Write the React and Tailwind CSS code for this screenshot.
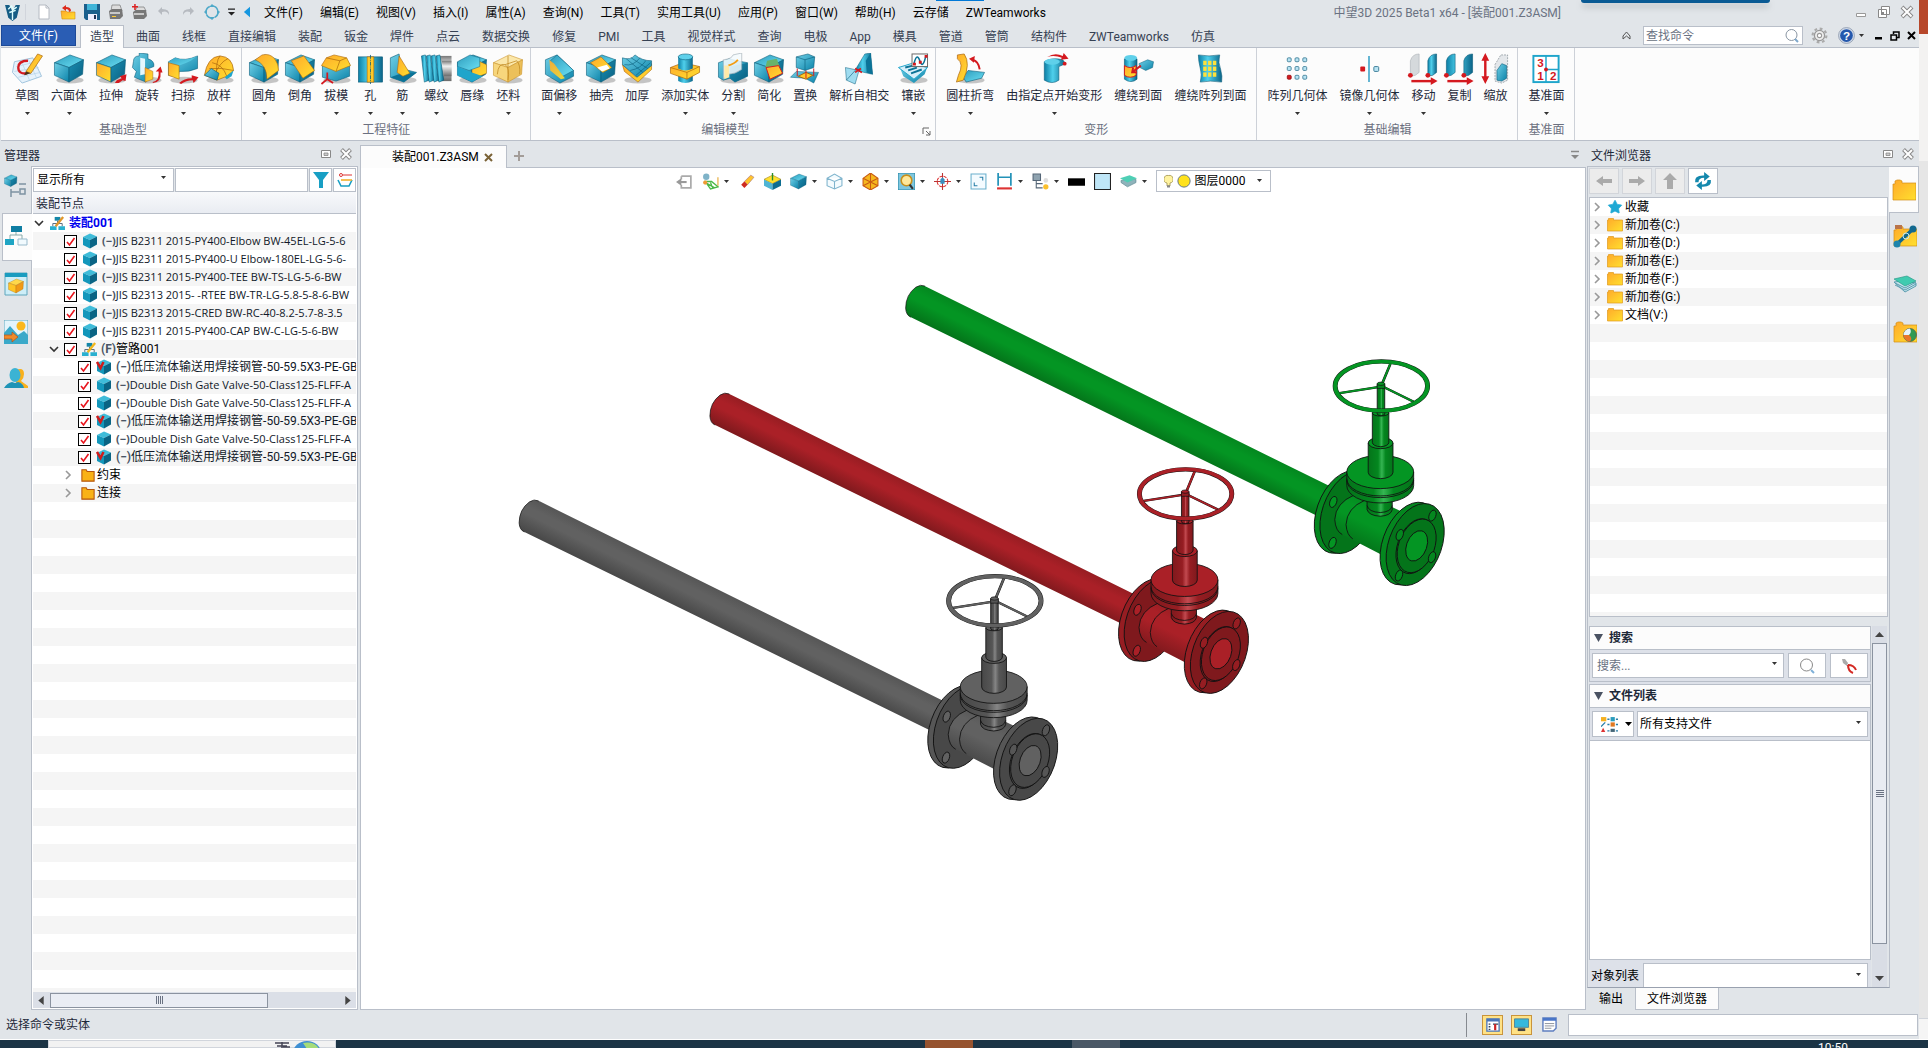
import { Star } from "lucide-react";

const C = { light: "#5fd0ea", mid: "#1fa5cb", dark: "#0b7397", line: "#075a78", gold: "#ffc928", amber: "#f39c12", goldLine: "#a8640a", red: "#d4191f" };

/* 通用等轴立方体 */
function Cube({ top = "url(#bTop)", left = "url(#bMid)", right = "url(#bDark)", line = C.line }) {
  return (
    <g stroke={line} strokeWidth="0.6" strokeLinejoin="round">
      <path d="M1 10 17 2 31 7 16 15Z" fill={top} />
      <path d="M1 10 16 15 16 30 1 23Z" fill={left} />
      <path d="M16 15 31 7 30 22 16 30Z" fill={right} />
    </g>
  );
}

function Shadow() {
  return <ellipse cx="17" cy="28" rx="14" ry="3.5" fill="#000" opacity="0.22" />;
}

/* 功能区图标 32x32 */
const ribbonIcons = {
  sketch: (
    <>
      <path d="M3 9 22 5 31 24 11 31 1 20Z" fill="#e6f2fb" stroke="#9fc3dc" />
      <path d="M5 14 26 9M3 19 28 15M7 25 30 20M10 8 19 29M17 6 26 26" stroke="#b4d3e8" strokeWidth="0.7" fill="none" />
      <path d="M17 8Q7 8 7 15T16 21" fill="none" stroke={C.red} strokeWidth="2.4" />
      <path d="M15 19 27 1 32 3 20 21Z" fill="url(#gold)" stroke={C.goldLine} strokeWidth="0.7" />
      <path d="M15 19 13 23 20 21Z" fill="#4b3215" />
    </>
  ),
  box: <><Shadow /><Cube /></>,
  extrude: (
    <>
      <Shadow />
      <Cube left="url(#gold)" />
      <path d="M20 31 22 28 27 26 25 24 32 22 31 29 28 28 24 31Z" fill={C.red} />
    </>
  ),
  revolve: (
    <>
      <Shadow />
      <path d="M2 9Q2 3 8 3L8 0 17 1 17 6Q24 8 23 14L15 17 15 30 3 25 5 19 1 15Z" fill="url(#bMid)" stroke={C.line} strokeWidth="0.6" />
      <path d="M9 5 14 6 14 22 9 23Z" fill="#e4f7fd" />
      <path d="M14 15 22 19 22 27 14 30Z" fill="url(#gold)" stroke={C.goldLine} strokeWidth="0.5" />
      <path d="M22 30Q29 28 28 19L25 19 30 14 32 20 30 20Q31 30 22 31Z" fill={C.red} />
    </>
  ),
  sweep: (
    <>
      <Shadow />
      <path d="M1 9 8 5Q18 9 31 3L31 16Q22 20 12 19L11 25 1 23Z" fill="url(#bMid)" stroke={C.line} strokeWidth="0.6" />
      <path d="M1 9 8 5Q18 9 31 3L24 8Q18 11 12 13Z" fill="url(#bTop)" />
      <path d="M1 10 12 13 12 27 1 23Z" fill="url(#gold)" stroke={C.goldLine} strokeWidth="0.6" />
      <path d="M12 31Q17 26 25 26L25 23 32 25 27 31 26 28Q19 28 14 32Z" fill={C.red} />
    </>
  ),
  loft: (
    <>
      <Shadow />
      <path d="M1 23Q4 4 17 3 30 4 31 18L24 24 14 28Z" fill="url(#gold)" stroke={C.goldLine} strokeWidth="0.7" />
      <path d="M9 10Q20 12 24 24M17 3Q12 9 14 27M25 6Q17 9 10 25M6 16Q19 15 31 18" fill="none" stroke={C.goldLine} strokeWidth="0.7" />
      <path d="M1 23 8 16 16 21 14 28Z" fill="url(#bMid)" stroke={C.line} strokeWidth="0.6" />
      <path d="M22 25 31 18 29 24 24 27Z" fill={C.mid} />
    </>
  ),
  fillet: (
    <>
      <Shadow />
      <Cube />
      <path d="M14 2Q22 0 27 6 31 11 31 18L19 27Q19 12 7 7Z" fill="url(#gold)" stroke={C.goldLine} strokeWidth="0.6" />
    </>
  ),
  chamfer: (
    <>
      <Shadow />
      <Cube />
      <path d="M7 8 20 3 31 18 19 26Z" fill="url(#gold)" stroke={C.goldLine} strokeWidth="0.6" />
    </>
  ),
  draft: (
    <>
      <Shadow />
      <path d="M2 13 30 11 30 24 16 29 2 25Z" fill="url(#bMid)" stroke={C.line} strokeWidth="0.6" />
      <path d="M6 5 14 2 27 5 31 13 16 19 1 13Z" fill="url(#gold)" stroke={C.goldLine} strokeWidth="0.6" />
      <path d="M6 5 20 8 27 5M20 8 16 19" fill="none" stroke={C.goldLine} strokeWidth="0.7" />
      <path d="M7 20V27L1 32M7 27 13 31" fill="none" stroke={C.red} strokeWidth="1.8" />
    </>
  ),
  hole: (
    <>
      <rect x="4" y="4" width="25" height="26" fill="url(#bSide)" stroke={C.line} strokeWidth="0.6" />
      <rect x="13" y="4" width="7" height="26" fill={C.gold} stroke={C.goldLine} strokeWidth="0.6" />
      <path d="M16.500 2V32" stroke={C.line} strokeDasharray="4 1 1 1" strokeWidth="0.8" />
    </>
  ),
  rib: (
    <>
      <Shadow />
      <path d="M4 5 13 1 15 16 31 20 18 30 4 25Z" fill="url(#bMid)" stroke={C.line} strokeWidth="0.6" />
      <path d="M4 25 18 20 31 20 18 30Z" fill={C.dark} />
      <path d="M13 3 24 21 17 24 11 20Z" fill="url(#gold)" stroke={C.goldLine} strokeWidth="0.6" />
    </>
  ),
  thread: (
    <>
      <path d="M18 3H32V29H18Z" fill="url(#metal)" />
      {[0, 5, 10, 15].map((x) => (
        <path key={x} d={`M${1 + x} 3 ${5 + x} 2 ${9 + x} 28 ${4 + x} 30Z`} fill="url(#bSide)" stroke={C.line} strokeWidth="0.6" />
      ))}
      <path d="M22 8H32V24H24Z" fill="url(#metal)" />
    </>
  ),
  lip: (
    <>
      <Shadow />
      <Cube />
      <path d="M16 5 31 12 31 21 16 27 16 17 8 13Z" fill="url(#gold)" stroke={C.goldLine} strokeWidth="0.5" />
      <path d="M1 9 14 2 24 5 24 14 13 18 1 14Z" fill="url(#bTop)" stroke={C.line} strokeWidth="0.5" />
      <path d="M13 19 27 24 16 30 1 23V14Z" fill={C.mid} />
    </>
  ),
  stock: (
    <>
      <Shadow />
      <Cube top="#fbe7a9" left="#f7d67c" right="#ecc05a" line="#c99128" />
      <path d="M5 22Q6 10 13 12 18 15 16 28M13 12 25 8Q29 12 28 22M16 3 16 15" fill="none" stroke="#c28a22" strokeWidth="0.8" />
    </>
  ),
  faceOffset: (
    <>
      <Shadow />
      <path d="M2 7 14 2 31 18 31 24 17 31 2 22Z" fill="url(#bMid)" stroke={C.line} strokeWidth="0.6" />
      <path d="M14 2 31 18 20 24 7 8Z" fill="url(#bTop)" stroke={C.line} strokeWidth="0.5" />
      <path d="M6 7 11 11 22 26 18 27 7 18Z" fill="url(#gold)" opacity="0.9" />
    </>
  ),
  shell: (
    <>
      <Shadow />
      <Cube />
      <path d="M5 10 16 4 27 15 18 20Z" fill="url(#gold)" stroke={C.goldLine} strokeWidth="0.6" />
      <path d="M12 15 22 12 25 16 17 19Z" fill="#fff" />
    </>
  ),
  thicken: (
    <>
      <Shadow />
      <path d="M1 12 14 24 31 11 31 17 17 30 3 19Z" fill="url(#gold)" stroke={C.goldLine} strokeWidth="0.6" />
      <path d="M1 5Q9 8 14 2 21 8 31 8L31 13 16 25 1 12Z" fill="url(#bMid)" stroke={C.line} strokeWidth="0.6" />
      <path d="M5 6 22 20M10 5 27 16M3 12Q12 14 19 5M9 18Q20 16 25 8M15 23 30 10" fill="none" stroke={C.line} strokeWidth="0.6" />
    </>
  ),
  addSolid: (
    <>
      <path d="M9 22H24V29Q16 33 9 29Z" fill="url(#bSide)" />
      <path d="M1 15 14 10 31 14 31 20 18 27 1 21Z" fill="url(#gold)" stroke={C.goldLine} strokeWidth="0.7" />
      <path d="M1 15 18 20 31 14M18 20V27" fill="none" stroke={C.goldLine} strokeWidth="0.7" />
      <path d="M9 4V16Q16 20 24 16V4Z" fill="url(#bSide)" />
      <ellipse cx="16.500" cy="4" rx="7.500" ry="3" fill={C.light} stroke={C.line} strokeWidth="0.6" />
    </>
  ),
  split: (
    <>
      <Shadow />
      <path d="M1 10 12 6 20 8 31 10 31 24 18 30 13 26 6 28 1 25Z" fill="url(#bMid)" stroke={C.line} strokeWidth="0.6" />
      <path d="M13 14 31 10V24L18 30 13 26Z" fill="url(#bDark)" />
      <path d="M6 7Q15 6 16 2L25 0V17Q18 22 11 22L6 27Z" fill="#f5fbfe" opacity="0.85" stroke="#9aa7b0" strokeWidth="0.7" />
      <path d="M11 13Q18 11 21 7" stroke={C.amber} strokeWidth="2" fill="none" />
      <path d="M7 13 12 13 12 25 7 27Z" fill="#ffe9a8" />
    </>
  ),
  simplify: (
    <>
      <Shadow />
      <Cube />
      <path d="M14 8 24 6 27 14 12 16Z" fill="#69b36a" />
      <path d="M13 15 26 13 30 21 17 27Z" fill="url(#gold)" stroke={C.red} strokeWidth="1" />
    </>
  ),
  replace: (
    <>
      <path d="M1 25 7 19 30 20 25 31 16 26Z" fill="url(#bMid)" stroke={C.line} strokeWidth="0.5" />
      <path d="M9 24 17 20 24 23 17 27Z" fill={C.gold} stroke={C.goldLine} />
      <path d="M8 16V24M25 16V24M17 18V26" stroke={C.red} strokeWidth="1" />
      <path d="M7 4 19 1 26 4 25 15 16 18 7 15Z" fill="url(#bMid)" stroke={C.line} strokeWidth="0.6" />
      <path d="M7 4 16 7 26 4M16 7V18" stroke={C.line} strokeWidth="0.6" fill="none" />
    </>
  ),
  intersect: (
    <>
      <path d="M22 1 28 0 30 22 17 19 13 16Z" fill="url(#bSide)" stroke={C.line} strokeWidth="0.5" />
      <path d="M28 0 30 22 24 20 23 8Z" fill={C.dark} />
      <path d="M2 15 16 18 12 32 3 28Z" fill="#9fdcf0" stroke={C.line} strokeWidth="0.5" />
      <path d="M3 28 13 17" stroke={C.line} strokeWidth="0.6" />
      <path d="M12 16 19 20M18 16 12 20" stroke={C.red} strokeWidth="1.8" />
    </>
  ),
  inlay: (
    <>
      <Shadow />
      <path d="M2 14 16 22 31 14 28 22 17 31 6 24Z" fill="url(#bMid)" />
      <path d="M1 15 14 11 31 15 17 27Z" fill="#d6effa" stroke={C.mid} />
      <path d="M8 15 16 13M11 18 20 15M14 21 25 17" stroke={C.dark} strokeWidth="2" />
      <rect x="15" y="1" width="16" height="13" fill="#fff" stroke="#666" />
      <path d="M17 11Q20 -1 23 8T29 4" fill="none" stroke={C.dark} strokeWidth="1.6" />
      <path d="M16 10h3v3h-3zM22 8h3v3h-3zM28 2h3v3h-3z" fill={C.red} />
    </>
  ),
  bend: (
    <>
      <Shadow />
      <path d="M9 25 14 18 31 20 28 26 12 30Z" fill="url(#bTop)" stroke={C.line} strokeWidth="0.6" />
      <path d="M3 2 10 1Q17 11 9 28L2 30 4 23Q10 11 3 6Z" fill="url(#gold)" stroke={C.goldLine} strokeWidth="0.7" />
      <path d="M26 17Q25 9 19 7" stroke={C.red} strokeWidth="2" fill="none" />
      <path d="M15 6 21 3 20 10Z" fill={C.red} />
    </>
  ),
  pointBend: (
    <>
      <path d="M6 9V28Q14 33 21 28V14L28 11 25 7Q14 4 6 9Z" fill="url(#bSide)" stroke={C.line} strokeWidth="0.6" />
      <ellipse cx="14" cy="9" rx="8" ry="3" fill={C.light} />
      <path d="M9 4Q17 -1 25 3L26 0 31 6 23 7 24 5Q17 2 9 4Z" fill={C.red} />
      <circle cx="27" cy="11" r="2" fill={C.red} />
    </>
  ),
  wrapFace: (
    <>
      <path d="M2 6V27Q9 32 15 27V6Z" fill="url(#bSide)" stroke={C.line} strokeWidth="0.6" />
      <ellipse cx="8.500" cy="5" rx="6.500" ry="3" fill={C.light} />
      <path d="M2 13Q8 17 14 13V23Q8 27 2 23Z" fill="url(#gold)" stroke={C.red} />
      <path d="M17 11 26 7 32 9 31 15 24 18 18 15Z" fill="url(#bMid)" stroke={C.line} strokeWidth="0.5" />
      <path d="M19 13 11 19M15 20 10 20 11 15" stroke={C.red} strokeWidth="2" fill="none" />
    </>
  ),
  wrapPattern: (
    <>
      <path d="M4 2Q15 4 26 2 24 10 27 17 29 24 28 30 16 28 6 30 8 22 6 16 4 8 4 2Z" fill="url(#bSide)" stroke={C.line} strokeWidth="0.6" />
      {[9, 14, 19].map((x) => [8, 14, 20].map((y) => <rect key={x + "-" + y} x={x} y={y} width="3.500" height="4.500" fill="#ffe13a" />))}
    </>
  ),
  pattern: (
    <>
      {[6, 14, 22].map((x) => [5, 14, 23].map((y) => (
        <rect key={x + "-" + y} x={x} y={y} width="4" height="4" rx="1" fill={x === 6 && y === 23 ? C.red : "#b9e4f4"} stroke={x === 6 && y === 23 ? "#9a1014" : "#3e7d97"} strokeWidth="0.9" />
      )))}
    </>
  ),
  mirror: (
    <>
      <path d="M16 3V30" stroke="#2b9cc4" strokeWidth="1.500" />
      <rect x="7" y="14" width="5" height="5" rx="1" fill={C.red} />
      <rect x="21" y="14" width="5" height="5" rx="1" fill="#b9e4f4" stroke="#3e7d97" />
    </>
  ),
  move: (
    <>
      <path d="M3 8Q5 1 12 1V20L8 23 3 24Z" fill="#d5d9dc" stroke="#a8adb2" strokeWidth="0.6" />
      <path d="M21 8Q23 1 30 1V20L26 23 21 24Z" fill="url(#bSide)" stroke={C.line} strokeWidth="0.6" />
      <path d="M4 29H26" stroke={C.red} strokeWidth="2.500" />
      <path d="M24 25 31 29 24 33Z" fill={C.red} />
      <circle cx="3" cy="23" r="2.500" fill={C.red} />
      <circle cx="21" cy="23" r="2.500" fill={C.red} />
    </>
  ),
  copy: (
    <>
      <path d="M3 8Q5 1 12 1V20L8 23 3 24ZM21 8Q23 1 30 1V20L26 23 21 24Z" fill="url(#bSide)" stroke={C.line} strokeWidth="0.6" />
      <path d="M4 29H26" stroke={C.red} strokeWidth="2.500" />
      <path d="M24 25 31 29 24 33Z" fill={C.red} />
      <circle cx="3" cy="23" r="2.500" fill={C.red} />
      <circle cx="21" cy="23" r="2.500" fill={C.red} />
    </>
  ),
  scale: (
    <>
      <path d="M6 5V27" stroke={C.red} strokeWidth="2.500" />
      <path d="M2 8 6 0 10 8ZM2 24 6 32 10 24Z" fill={C.red} />
      <path d="M16 12 22 2 29 2V28L23 31 16 29Z" fill="#e4e7ea" stroke="#8f979e" strokeDasharray="2 1" strokeWidth="0.8" />
      <path d="M18 18 23 11 28 13V26L23 29 18 28Z" fill="url(#bMid)" stroke={C.line} strokeWidth="0.6" />
    </>
  ),
  datum: (
    <>
      <rect x="3" y="3" width="26" height="27" fill="#fff" stroke={C.mid} strokeWidth="2" />
      <path d="M16 3V17H29M16 17V30" stroke={C.mid} strokeWidth="1.500" fill="none" />
      <g fill={C.red} fontSize="12" fontWeight="700" fontFamily="Liberation Sans">
        <text x="7" y="14">3</text>
        <text x="7" y="28">1</text>
        <text x="20" y="28">2</text>
      </g>
      <circle cx="16" cy="17" r="2" fill={C.red} />
    </>
  ),
};

/* [名称, 图标, 是否有下拉箭头] */
const ribbonGroups = [
  { name: "基础造型", items: [["草图", "sketch", 1], ["六面体", "box", 1], ["拉伸", "extrude"], ["旋转", "revolve"], ["扫掠", "sweep", 1], ["放样", "loft", 1]] },
  { name: "工程特征", items: [["圆角", "fillet", 1], ["倒角", "chamfer"], ["拔模", "draft", 1], ["孔", "hole", 1], ["筋", "rib", 1], ["螺纹", "thread", 1], ["唇缘", "lip"], ["坯料", "stock", 1]] },
  { name: "编辑模型", more: true, items: [["面偏移", "faceOffset", 1], ["抽壳", "shell"], ["加厚", "thicken"], ["添加实体", "addSolid", 1], ["分割", "split", 1], ["简化", "simplify"], ["置换", "replace"], ["解析自相交", "intersect"], ["镶嵌", "inlay", 1]] },
  { name: "变形", items: [["圆柱折弯", "bend", 1], ["由指定点开始变形", "pointBend", 1], ["缠绕到面", "wrapFace"], ["缠绕阵列到面", "wrapPattern"]] },
  { name: "基础编辑", items: [["阵列几何体", "pattern", 1], ["镜像几何体", "mirror", 1], ["移动", "move", 1], ["复制", "copy"], ["缩放", "scale"]] },
  { name: "基准面", items: [["基准面", "datum", 1]] },
];

const menus = ["文件(F)", "编辑(E)", "视图(V)", "插入(I)", "属性(A)", "查询(N)", "工具(T)", "实用工具(U)", "应用(P)", "窗口(W)", "帮助(H)", "云存储", "ZWTeamworks"];

const ribbonTabs = ["曲面", "线框", "直接编辑", "装配", "钣金", "焊件", "点云", "数据交换", "修复", "PMI", "工具", "视觉样式", "查询", "电极", "App", "模具", "管道", "管筒", "结构件", "ZWTeamworks", "仿真"];

const parts = [
  "JIS B2311 2015-PY400-Elbow BW-45EL-LG-5-6",
  "JIS B2311 2015-PY400-U Elbow-180EL-LG-5-6-",
  "JIS B2311 2015-PY400-TEE BW-TS-LG-5-6-BW",
  "JIS B2313 2015- -RTEE BW-TR-LG-5.8-5-8-6-BW",
  "JIS B2313 2015-CRED BW-RC-40-8.2-5.7-8-3.5",
  "JIS B2311 2015-PY400-CAP BW-C-LG-5-6-BW",
];

const pipe = "低压流体输送用焊接钢管-50-59.5X3-PE-GB";
const valve = "Double Dish Gate Valve-50-Class125-FLFF-A";
const pipeParts = [pipe, valve, valve, pipe, valve, pipe];

const drives = ["新加卷(C:)", "新加卷(D:)", "新加卷(E:)", "新加卷(F:)", "新加卷(G:)", "文档(V:)"];

function Caret({ className = "" }) {
  return (
    <svg viewBox="0 0 5 3" className={"w-[5px] h-[3px] shrink-0 " + className}>
      <path d="M0 0H5L2.5 3Z" fill="#333" />
    </svg>
  );
}

function Icon({ size = "size-4", box = 16, children }) {
  return (
    <svg viewBox={`0 0 ${box} ${box}`} className={size + " shrink-0"} fill="none" aria-hidden="true">
      {children}
    </svg>
  );
}

function Defs() {
  return (
    <svg className="absolute size-0" aria-hidden="true">
      <defs>
        <linearGradient id="bTop" x2="1" y2="1"><stop stopColor="#2f9dbd" /><stop offset="1" stopColor="#6be0f5" /></linearGradient>
        <linearGradient id="bMid" x2="1" y2="1"><stop stopColor="#6fcfe6" /><stop offset="1" stopColor="#0b83a9" /></linearGradient>
        <linearGradient id="bDark" x2="1" y2="1"><stop stopColor="#1a8fb3" /><stop offset="1" stopColor="#0a5f80" /></linearGradient>
        <linearGradient id="bSide"><stop stopColor="#0c7fa6" /><stop offset="0.4" stopColor="#4fd0ec" /><stop offset="1" stopColor="#0a6488" /></linearGradient>
        <linearGradient id="gold" x2="1" y2="1"><stop stopColor="#ffa92b" /><stop offset="1" stopColor="#ffe02e" /></linearGradient>
        <linearGradient id="metal" x2="0" y2="1"><stop stopColor="#777" /><stop offset="0.35" stopColor="#f2f2f2" /><stop offset="1" stopColor="#6a6a6a" /></linearGradient>
      </defs>
    </svg>
  );
}

function TitleBar() {
  return (
    <header className="flex items-center h-6 pl-1 pr-1">
      <Icon size="size-[17px]">
        <path d="M1 1H5L8 7 11 1H15L12 13 8 16 4 13Z" fill="#155d85" />
        <path d="M4 5 7 2 9 5 12 3M5 8 11 6M8 5V15" stroke="#dff" strokeWidth="1.3" />
      </Icon>
      <span className="w-px h-4 ml-1 mr-[10px] bg-gray-300" />
      <div className="flex items-center gap-2">
        <button aria-label="新建"><Icon><path d="M3 1H10L13 4V15H3Z" fill="#fff" stroke="#b5bac2" /><path d="M10 1V4H13" stroke="#b5bac2" /></Icon></button>
        <button aria-label="打开"><Icon><path d="M1 7H6L7 8H15V15H2Z" fill="url(#gold)" stroke="#d08a14" strokeWidth="0.6" /><path d="M11 7Q11 3 6 3V1L2 4 6 7V5Q9 5 9 8Z" fill="#dd2a1b" /></Icon></button>
        <button aria-label="保存"><Icon><path d="M0 0H16V16H2L0 14Z" fill="#1b5f8c" /><path d="M3 0H13V6H3Z" fill="#3fb4d8" /><path d="M4 10H13V16H4Z" fill="#eef" /><path d="M10 11h2v4h-2z" fill="#235" /></Icon></button>
        <button aria-label="打印"><Icon><path d="M4 1H12L14 7H3Z" fill="#ddd" stroke="#777" strokeWidth="0.7" /><path d="M1 7 4 5H14L15 12 12 15H2Z" fill="#777" /><path d="M2 8H12V10H2Z" fill="#c8c8c8" /><path d="M4 12h4v1h-4z" fill="#fc3" /></Icon></button>
        <button aria-label="打印预览"><Icon><path d="M5 3H12L14 7H3Z" fill="#ddd" stroke="#777" strokeWidth="0.7" /><path d="M1 8 4 6H14L15 12 12 15H2Z" fill="#777" /><path d="M2 9H12V11H2Z" fill="#c8c8c8" /><path d="M0 2h6v1.500h-6zM2.200 0h1.500v6h-1.500z" fill="#d22" /></Icon></button>
        <button aria-label="撤销"><Icon><path d="M6 3 2 7 6 11V8Q11 6 13 11 14 5 6 5Z" fill="#b6bac0" /></Icon></button>
        <button aria-label="重做"><Icon><path d="M10 3 14 7 10 11V8Q5 6 3 11 2 5 10 5Z" fill="#b6bac0" /></Icon></button>
        <button aria-label="更新"><Icon><circle cx="8" cy="8" r="6" stroke="#4fa9c9" strokeWidth="1.600" strokeDasharray="6.400 3" /><path d="M8 0 11 3H5ZM8 16 5 13H11ZM0 8 3 5V11ZM16 8 13 11V5Z" fill="#4fa9c9" /></Icon></button>
      </div>
      <button aria-label="更多" className="ml-2 mr-2"><Icon size="w-[7px] h-3" box={8}><path d="M0 0H8V1.500H0ZM0 4H8L4 8Z" fill="#222" /></Icon></button>
      <button aria-label="收起" className="mr-[14px]"><Icon size="w-[7px] h-3" box={8}><path d="M8 -2V10L1 4Z" fill="#1697e0" /></Icon></button>
      <nav className="flex gap-[17px] pt-[2px] whitespace-nowrap text-black">
        {menus.map((m) => <button key={m}>{m}</button>)}
      </nav>
      <h1 className="ml-auto mr-[292px] pt-[2px] whitespace-nowrap text-gray-500">中望3D 2025 Beta1 x64 - [装配001.Z3ASM]</h1>
      <div className="flex items-center gap-[7px]">
        <button aria-label="最小化"><Icon><path d="M3.500 9.500H12.500V12.500H3.500Z" fill="#fff" stroke="#999" /></Icon></button>
        <button aria-label="还原"><Icon><path d="M5.500 2.500H13.500V10.500H5.500ZM2.500 5.500H10.500V13.500H2.500Z" fill="#fff" stroke="#888" /><path d="M5 8h3v3h-3z" fill="#888" /></Icon></button>
        <button aria-label="关闭"><Icon><path d="M3 3 13 13M13 3 3 13" stroke="#888" strokeWidth="4" /><path d="M3.500 3.500 12.500 12.500M12.500 3.500 3.500 12.500" stroke="#fff" strokeWidth="2" /></Icon></button>
      </div>
    </header>
  );
}

function RibbonTabs() {
  return (
    <div className="flex items-center h-[23px] text-gray-700 whitespace-nowrap">
      <button className="w-[75px] h-[21px] ml-px mr-1 bg-[#2a5db4] border border-[#1d4a98] text-white">文件(F)</button>
      <button className="relative z-10 -mb-[2px] h-[23px] w-11 bg-[#fcfcfc] border border-b-0 border-[#b9bfc9]">造型</button>
      <nav className="flex gap-[22px] ml-3 pt-[2px]">
        {ribbonTabs.map((t) => <button key={t}>{t}</button>)}
      </nav>
      <div className="flex items-center ml-auto">
        <button aria-label="折叠功能区" className="mr-3"><Icon size="size-[9px]" box={9}><path d="M1 5 4.500 1 8 5V8L4.500 5 1 8Z" stroke="#555" /></Icon></button>
        <label className="flex items-center w-40 h-[19px] px-[2px] bg-white border border-[#b9bfc9]">
          <input aria-label="查找命令" placeholder="查找命令" className="w-full min-w-0 outline-none placeholder:text-gray-500" />
          <Icon><circle cx="7.500" cy="7" r="5.500" stroke="#8a96a3" /><path d="M11 11 14 14" stroke="#7fa8cc" strokeWidth="2" /></Icon>
        </label>
        <button aria-label="设置" className="ml-2"><Icon size="size-[17px]"><circle cx="8" cy="8" r="6.500" stroke="#aaa" strokeWidth="2" strokeDasharray="2.600 2.505" /><circle cx="8" cy="8" r="4.800" fill="#eee" stroke="#999" strokeWidth="1.200" /><circle cx="8" cy="8" r="2" fill="#fff" stroke="#999" /></Icon></button>
        <button aria-label="帮助" className="ml-[10px] flex items-center gap-1">
          <Icon size="size-[17px]"><circle cx="8" cy="8" r="7.500" fill="#cfd8e6" stroke="#8894a8" strokeWidth="0.7" /><circle cx="8" cy="8" r="6" fill="#2458ad" /><text x="8" y="12" textAnchor="middle" fontSize="11" fontWeight="700" fill="#fff" fontFamily="Liberation Sans">?</text></Icon>
          <Caret />
        </button>
        <div className="flex items-center gap-[7px] ml-[10px] mr-[3px]">
          <button aria-label="最小化文档"><Icon size="size-[9px]" box={9}><path d="M1 6H8V8.500H1Z" fill="#000" /></Icon></button>
          <button aria-label="还原文档"><Icon size="size-[10px]" box={10}><path d="M3.500 3V1H9V6.500H7M1 4H6.500V9H1Z" stroke="#000" strokeWidth="1.500" /></Icon></button>
          <button aria-label="关闭文档"><Icon size="size-[9px]" box={9}><path d="M1 1 8 8M8 1 1 8" stroke="#000" strokeWidth="2" /></Icon></button>
        </div>
      </div>
    </div>
  );
}

function Ribbon() {
  return (
    <div className="flex h-[94px] pl-1 ml-px bg-[#fcfcfc] border-y border-[#b9bfc9] whitespace-nowrap">
      {ribbonGroups.map((g) => (
        <section key={g.name} className="relative flex flex-col px-1 border-r border-[#cdd1d8]">
          <div className="flex">
            {g.items.map(([label, icon, drop]) => (
              <button key={label} className="flex flex-col items-center min-w-8 px-[6px] pt-[5px] text-gray-800">
                <svg viewBox="0 0 32 33" className="-mx-2 size-8" fill="none">{ribbonIcons[icon]}</svg>
                <span className="leading-[22px]">{label}</span>
                <span className="flex items-center h-3">{drop && <Caret />}</span>
              </button>
            ))}
          </div>
          <h2 className={"text-center leading-[22px] text-[#6b7080]" + (g.more ? " pr-4" : "")}>{g.name}</h2>
          {g.more && (
            <button aria-label="更多选项" className="absolute right-1 bottom-1">
              <Icon size="size-[9px]" box={9}><path d="M1 7V1H7M4 4 8 8M8 4V8H4" stroke="#666" /></Icon>
            </button>
          )}
        </section>
      ))}
    </div>
  );
}

function PanelHeader({ title, end }) {
  return (
    <div className={"flex items-center h-[25px] shrink-0 pl-1 text-gray-800 " + end}>
      <h2 className="mr-auto pt-1">{title}</h2>
      <button aria-label="固定" className="mr-[9px]"><Icon size="size-[10px]" box={10}><path d="M0.500 1.500H9.500V8.500H0.500Z" fill="#fff" stroke="#888" /><path d="M3 4H7V6.500H3Z" fill="#ccc" stroke="#888" strokeWidth="0.8" /></Icon></button>
      <button aria-label="关闭面板"><Icon size="size-3" box={12}><path d="M1.500 1.500 10.500 10.500M10.500 1.500 1.500 10.500" stroke="#888" strokeWidth="4" /><path d="M2 2 10 10M10 2 2 10" stroke="#fff" strokeWidth="2" /></Icon></button>
    </div>
  );
}

function MiniCube({ marked }) {
  return (
    <Icon size="size-4" box={32}>
      <path d="M2 8 16 1 30 7 16 14Z" fill="#3fbcd9" />
      <path d="M2 8 16 14V31L2 24Z" fill="#1397bb" />
      <path d="M16 14 30 7V23L16 31Z" fill="#0a6484" />
      {marked && <path d="M2 6 9 18 15 6" stroke="#d01c1c" strokeWidth="5" />}
    </Icon>
  );
}

function Check({ label }) {
  return (
    <span className="grid shrink-0 mr-[5px]">
      <input type="checkbox" defaultChecked aria-label={label} className="col-start-1 row-start-1 size-[13px] appearance-none bg-white border border-black" />
      <svg viewBox="0 0 13 13" className="col-start-1 row-start-1 size-[13px] pointer-events-none">
        <path d="M3 7 5.500 10 10.500 3" fill="none" stroke="#e8141c" strokeWidth="1.600" />
      </svg>
    </span>
  );
}

function Chevron({ open }) {
  return (
    <Icon size="size-[10px]" box={10}>
      <path d={open ? "M1 3 5 7 9 3" : "M3 1 7 5 3 9"} stroke={open ? "#333" : "#999"} strokeWidth="1.600" />
    </Icon>
  );
}

function NodeIcon({ accent }) {
  return (
    <Icon size="size-[15px]">
      <path d="M5 1h6v4h-6z" fill="#1386a8" />
      <path d="M8 5V8M3 11V8H13V11" stroke="#567" />
      <path d="M0 11h7v4h-7zM9 11h7v4h-7z" fill="#29b0d0" />
      <path d="M6 11 14 1" stroke={accent} strokeWidth="2.500" />
    </Icon>
  );
}

/* 纯西文零件名用小一号字 */
function PartRow({ name, marked, indent }) {
  return (
    <li className={"flex items-center h-[18px] " + indent}>
      <Check label={name} />
      <MiniCube marked={marked} />
      <span className={"ml-1 text-gray-900" + (marked ? "" : " text-[11px] font-['Open_Sans',sans-serif]")}>
        <b className="text-gray-600">(−)</b>{name}
      </span>
    </li>
  );
}

function FolderRow({ name }) {
  return (
    <li className="flex items-center h-[18px] pl-[30px]">
      <Chevron />
      <Icon size="size-[14px] ml-2 mr-[2px]"><path d="M1 2H6L7 4H15V15H1Z" fill="#f9b216" stroke="#b5540d" strokeWidth="1.200" /></Icon>
      {name}
    </li>
  );
}

function ManagerPanel() {
  return (
    <aside className="flex flex-col w-[360px] shrink-0">
      <PanelHeader title="管理器" end="pr-2" />
      <div className="flex flex-1 min-h-0">
        <nav className="flex flex-col w-[31px] shrink-0">
          <button aria-label="历史" className="flex justify-center pt-2 h-[47px]">
            <Icon size="size-6" box={24}><g transform="scale(.42)"><Cube /></g><path d="M15 10H22M7 15V23M7 18H15" stroke="#7d93a3" strokeWidth="1.500" /><path d="M16 15h5v5h-5z" stroke="#7d93a3" strokeWidth="1.500" /></Icon>
          </button>
          <button aria-label="装配" className="relative z-10 grid place-items-center h-12 ml-[2px] -mr-px pb-1 pr-1 bg-[#fcfcfc] border border-r-0 border-[#b9bfc9]">
            <Icon size="size-6" box={24}><path d="M7 3h11v6h-11z" fill="#0f7ea3" /><path d="M12 9V12M6 16V12H18V16" stroke="#8aa" /><path d="M1 16h9v6h-9z" fill="#1fa5c4" /><path d="M14 16h9v6h-9z" fill="#f1fafe" stroke="#9bc" /></Icon>
          </button>
          <button aria-label="视图" className="grid place-items-center h-12 pb-[2px]">
            <Icon size="size-6" box={24}><path d="M1 1H23V23H1Z" fill="#cdeef8" stroke="#5fa6bd" /><path d="M1 1H23V5H1Z" fill="#1a9cbf" /><g transform="translate(4 6) scale(.5)"><Cube top="#ffd84a" left="#ffc425" right="#f09a18" line="#a8640a" /></g></Icon>
          </button>
          <button aria-label="视觉" className="grid place-items-center h-12 pb-[2px]">
            <Icon size="size-6" box={24}><path d="M0 0H24V24H0Z" fill="#e3f4fb" stroke="#5fa6bd" /><path d="M0 13 6 6 14 15 20 11 24 15V24H0Z" fill="#3aa9c9" /><circle cx="17" cy="6" r="4.500" fill="#fbb81c" /><path d="M0 15H8V12L14 17 8 22V19H0Z" fill="#f08a2a" stroke="#b1521a" strokeWidth="0.7" /></Icon>
          </button>
          <button aria-label="角色" className="grid place-items-center h-12 pb-1">
            <Icon size="size-6" box={24}><path d="M12 3Q20 0 20 7 20 11 17 14L24 19V21H12Z" fill="#f8b01c" /><ellipse cx="11" cy="8" rx="5.500" ry="7" fill="#3bb3d4" /><path d="M0 21Q3 16 8 15L11 16 14 15Q19 16 20 21Z" fill="#1d93b6" /></Icon>
          </button>
        </nav>
        <div className="flex flex-col flex-1 min-w-0 mr-[2px] p-px bg-white border border-[#b9bfc9]">
          <div className="flex h-6 gap-px bg-[#e1e5e9]">
            <span className="relative w-[141px]">
              <select aria-label="显示范围" className="w-full h-full px-[3px] appearance-none bg-white border border-[#b9bfc9]"><option>显示所有</option></select>
              <Caret className="absolute right-2 top-2" />
            </span>
            <input aria-label="过滤文本" className="flex-1 min-w-0 bg-white border border-[#b9bfc9]" />
            <button aria-label="过滤" className="grid place-items-center w-[23px] bg-white border border-[#b9bfc9]"><Icon><path d="M0 0H16L10 8V16H6V8Z" fill="#189fc4" /></Icon></button>
            <button aria-label="过滤设置" className="grid place-items-center w-[23px] bg-white border border-[#b9bfc9]"><Icon><circle cx="4" cy="3" r="1.500" stroke="#d33" /><path d="M6 3H15" stroke="#d33" /><path d="M1 8 4 14H12L15 8" stroke="#189fc4" strokeWidth="1.600" /><path d="M4 8H15" stroke="#f3b02a" strokeWidth="1.600" /></Icon></button>
          </div>
          <div className="h-[22px] px-[3px] leading-6 bg-gradient-to-b from-[#f8f9fb] to-[#e9ecf2] border-b border-[#b9bfc9] text-gray-800">装配节点</div>
          <ul className="flex-1 min-h-0 overflow-hidden whitespace-nowrap bg-[repeating-linear-gradient(#fff_0_18px,#f5f5f5_18px_36px)]">
            <li className="flex items-center h-[18px] pl-px">
              <Chevron open />
              <span className="ml-[6px] mr-1"><NodeIcon accent="#e0962a" /></span>
              <b className="text-[#0000ee]">装配001</b>
            </li>
            {parts.map((p) => <PartRow key={p} name={p} indent="pl-[31px]" />)}
            <li className="flex items-center h-[18px] pl-4">
              <Chevron open />
              <span className="ml-[5px]"><Check label="管路001" /></span>
              <NodeIcon accent="#f2b71c" />
              <span className="ml-1"><b className="text-gray-600">(F)</b>管路001</span>
            </li>
            {pipeParts.map((p, i) => <PartRow key={i} name={p} marked={p === pipe} indent="pl-[45px]" />)}
            <FolderRow name="约束" />
            <FolderRow name="连接" />
          </ul>
          <div className="flex items-center h-4 px-[5px] bg-[#dbdfe7]">
            <svg viewBox="0 0 6 10" className="w-[6px] h-[9px]"><path d="M6 0V10L0 5Z" fill="#444" /></svg>
            <div className="flex justify-center items-center gap-px w-[218px] h-[15px] mx-[6px] bg-[#eaedf4] border border-[#8b93a0]">
              {[0, 1, 2, 3].map((i) => <i key={i} className="w-px h-2 bg-gray-500" />)}
            </div>
            <svg viewBox="0 0 6 10" className="w-[6px] h-[9px] ml-auto"><path d="M0 0V10L6 5Z" fill="#444" /></svg>
          </div>
        </div>
      </div>
    </aside>
  );
}

function Tool({ label, drop, children }) {
  return (
    <button aria-label={label} className="flex items-center gap-[5px]">
      <Icon size="size-[17px]">{children}</Icon>
      {drop && <Caret />}
    </button>
  );
}

function ViewToolbar() {
  return (
    <div className="flex justify-center items-center gap-[9px] h-[26px]">
      <Tool label="退出"><path d="M5 3H14V14H5V11M5 6V3" stroke="#aaa" strokeWidth="1.600" /><path d="M10 8.500H3" stroke="#999" strokeWidth="2" /><path d="M5 5V12L0 8.500Z" fill="#999" /></Tool>
      <Tool label="对齐" drop><path d="M3 8 8 15 15 13 9 8ZM5 10 12 14M8 9 10 14" stroke="#4cb848" strokeWidth="1.200" /><circle cx="4" cy="3.500" r="3" fill="#7fb3c8" /><path d="M15 4V12" stroke="#e5a52a" /><circle cx="3" cy="9" r="2" fill="#ef9b34" /></Tool>
      <Tool label="擦除"><path d="M6 8 12 2 15 4 9 11Z" fill="url(#gold)" stroke="#a77" strokeWidth="0.6" /><path d="M3 11 6 8 9 11 6 14Z" fill="#cf2b20" /></Tool>
      <Tool label="平面"><path d="M0 6 8 2 16 6 8 10Z" fill="#ffe02e" stroke="#a8860a" strokeWidth="0.600" /><path d="M0 6 8 10V16L0 12Z" fill="#4fb5d4" /><path d="M8 10 16 6V12L8 16Z" fill="#0d6d90" /><path d="M8 0V7" stroke="#2b8c2b" strokeWidth="1.300" /></Tool>
      <Tool label="着色" drop><g transform="scale(.5)"><Cube /></g></Tool>
      <Tool label="线框" drop><path d="M1 5 8 1 15 5V12L8 15 1 12ZM1 5 8 8 15 5M8 8V15" stroke="#7fb4cd" fill="#f4fbfe" /></Tool>
      <Tool label="分析" drop><path d="M1 5 8 0 15 5V12L8 16 1 12Z" fill="#f6b81e" stroke="#c85a14" /><path d="M1 5 15 12M15 5 1 12M8 0V16" stroke="#c85a14" /></Tool>
      <Tool label="缩放" drop><path d="M0 0H16V16H0Z" fill="#7fc7de" stroke="#2986a5" /><circle cx="8" cy="7" r="5" fill="#ffe89a" stroke="#c8901c" strokeWidth="1.500" /><path d="M11 11 14 15" stroke="#333" strokeWidth="2" /></Tool>
      <Tool label="定位" drop><circle cx="8" cy="8" r="5" stroke="#d33" strokeDasharray="3 1" /><path d="M8 0V16M0 8H16" stroke="#b33" /><path d="M6 6 8 4 10 6V10H6Z" fill="#3a8fc0" /></Tool>
      <Tool label="选框"><path d="M1 1H15V15H1Z" stroke="#6ab0cd" fill="#f4fbff" /><path d="M4 9V12H7M12 7V4H9" stroke="#2a7fa8" /></Tool>
      <Tool label="标注" drop><path d="M2 0V12M14 0V12M2 4H14" stroke="#2392b8" strokeWidth="1.600" /><path d="M1 14.500H15" stroke="#d33" strokeWidth="2" /></Tool>
      <Tool label="显示" drop><path d="M1 1H8V7H1Z" fill="#8fa3b0" stroke="#567" /><path d="M4 7V14H10M4 10H10" stroke="#567" /><circle cx="13" cy="7" r="2.200" fill="#ddd" /><circle cx="13" cy="13" r="2.500" fill="#fbc02d" /></Tool>
      <Tool label="线宽"><path d="M0 5H16V12H0Z" fill="#000" /></Tool>
      <Tool label="颜色"><path d="M0.500 0.500H15.500V15.500H0.500Z" fill="#bfe6f7" stroke="#222" /></Tool>
      <Tool label="图层" drop><path d="M1 9 7 13 15 9V6L1 7Z" fill="#8fb3bb" stroke="#57828c" strokeWidth="0.600" /><path d="M0 5 9 2 16 5 7 9Z" fill="#4fcfb5" /></Tool>
      <label className="relative flex items-center w-[115px] h-[22px] pl-[7px] gap-1 bg-white border border-[#b9bfc9]">
        <Icon size="w-[9px] h-[15px]" box={12}><path d="M6 -2A5 5 0 0 0 4 8V12H8V8A5 5 0 0 0 6 -2Z" fill="#fff3a0" stroke="#998a40" /><path d="M4 11h4v3h-4z" fill="#888" /></Icon>
        <Icon size="size-[14px]"><circle cx="8" cy="8" r="7" fill="#ffe21c" stroke="#576b80" /></Icon>
        <select aria-label="图层" className="flex-1 min-w-0 appearance-none outline-none text-black"><option>图层0000</option></select>
        <Caret className="absolute right-2 top-2" />
      </label>
    </div>
  );
}

/* 管道 + 闸阀装配 */
function GateValve({ id, base, dark, rim, shine, x, y }) {
  const stem = `url(#${id}-stem)`;
  const body = `url(#${id}-body)`;
  return (
    <g transform={`translate(${x} ${y}) scale(0.3762 0.3333)`} strokeLinejoin="round">
      <defs>
        <linearGradient id={`${id}-pipe`} gradientUnits="userSpaceOnUse" x1="400" y1="205" x2="352" y2="291">
          <stop stopColor={rim} /><stop offset="0.3" stopColor={base} /><stop offset="0.5" stopColor={base} /><stop offset="1" stopColor={dark} />
        </linearGradient>
        <linearGradient id={`${id}-body`} gradientUnits="userSpaceOnUse" x1="1350" y1="715" x2="1285" y2="835">
          <stop stopColor={rim} /><stop offset="0.25" stopColor={base} /><stop offset="0.5" stopColor={base} /><stop offset="1" stopColor={dark} />
        </linearGradient>
        <linearGradient id={`${id}-stem`}>
          <stop stopColor={dark} /><stop offset="0.4" stopColor={rim} /><stop offset="0.55" stopColor={shine} /><stop offset="0.7" stopColor={rim} /><stop offset="1" stopColor={dark} />
        </linearGradient>
      </defs>
      <path d="M124 51Q108 42 95 52 68 75 68 115 69 136 82 142L1180 748 1215 660Z" fill={`url(#${id}-pipe)`} />
      <path d="M120 49Q108 42 95 52 68 75 68 115 69 136 82 142" fill="none" stroke="#111" strokeWidth="2" />
      <g stroke="#111" strokeWidth="2.400" fill={dark}>
        <ellipse cx="1233" cy="727" rx="71" ry="128" transform="rotate(17 1233 727)" fill={rim} />
        <ellipse cx="1248" cy="728" rx="71" ry="128" transform="rotate(17 1248 728)" />
        <ellipse cx="1206" cy="697" rx="9" ry="17" transform="rotate(17 1206 697)" fill={base} />
        <ellipse cx="1204" cy="820" rx="9" ry="17" transform="rotate(17 1204 820)" fill={base} />
      </g>
      <path d="M1275 672Q1212 695 1210 750 1212 785 1230 795L1345 862 1410 738 1340 700Z" fill={body} />
      <path d="M1262 676Q1212 700 1210 750 1212 785 1230 795M1290 692Q1242 715 1240 765 1242 797 1258 808" fill="none" stroke="#111" strokeWidth="2.400" />
      <g stroke="#111" strokeWidth="2.400">
        <path d="M1296 690V720Q1300 738 1331 740 1360 738 1363 720V690Z" fill={stem} />
        <path d="M1296 708Q1300 727 1331 729 1360 727 1363 708" fill="none" />
        <path d="M1242 607V648A89 52 0 0 0 1420 648V607Z" fill={stem} />
        <path d="M1242 632A89 52 0 0 0 1420 632M1242 627A89 52 0 0 0 1420 627" fill="none" />
        <ellipse cx="1331" cy="607" rx="89" ry="50" fill={base} />
        <path d="M1299 520V608A33 19 0 0 0 1365 608V520Z" fill={stem} />
        <ellipse cx="1332" cy="520" rx="33" ry="17" fill={base} />
        <path d="M1310 430V518A22 13 0 0 0 1354 518V430Z" fill={stem} stroke="#111" />
        <ellipse cx="1332" cy="430" rx="22" ry="9" fill={base} />
        <path d="M1323 344V432A10 6 0 0 0 1343 432V344Z" fill={stem} />
      </g>
      {/* 手轮 */}
      <g fill="none">
        <path d="M1325 352 1223 370M1335 345 1358 282M1340 352 1420 396" stroke="#111" strokeWidth="7" />
        <path d="M1325 352 1223 370M1335 345 1358 282M1340 352 1420 396" stroke={base} strokeWidth="5" />
        <ellipse cx="1334" cy="349" rx="123" ry="74" stroke="#1a1a1a" strokeWidth="13" />
        <ellipse cx="1334" cy="349" rx="123" ry="74" stroke={base} strokeWidth="10.500" />
      </g>
      <path d="M1323 342V356H1343V342Z" fill={rim} stroke="#111" strokeWidth="2" />
      <ellipse cx="1333" cy="342" rx="10" ry="5" fill={base} stroke="#111" strokeWidth="2" />
      <g stroke="#111" strokeWidth="2.400" fill={dark}>
        <ellipse cx="1408" cy="822" rx="71" ry="128" transform="rotate(17 1408 822)" fill={rim} />
        <ellipse cx="1424" cy="825" rx="71" ry="127" transform="rotate(17 1424 825)" />
        <ellipse cx="1425" cy="830" rx="48" ry="85" transform="rotate(17 1425 830)" />
        <ellipse cx="1428" cy="829" rx="48" ry="83" transform="rotate(17 1428 829)" />
        <ellipse cx="1428" cy="829" rx="27" ry="47" transform="rotate(17 1428 829)" fill={base} />
        {[[1470, 738], [1383, 796], [1469, 863], [1381, 918]].map(([cx, cy]) => (
          <ellipse key={cy} cx={cx} cy={cy} rx="9" ry="17" transform={`rotate(17 ${cx} ${cy})`} fill={rim} />
        ))}
      </g>
    </g>
  );
}

function DocumentArea() {
  return (
    <main className="flex flex-col flex-1 min-w-0 mr-px">
      <div className="flex items-end h-[26px] shrink-0">
        <div className="relative z-10 -mb-px flex items-center w-[147px] h-[23px] pl-[31px] bg-[#fcfcfc] border border-b-0 border-[#b9bfc9] text-black whitespace-nowrap">
          装配001.Z3ASM
          <button aria-label="关闭标签" className="ml-[5px]"><Icon size="size-[9px]" box={9}><path d="M1 1 8 8M8 1 1 8" stroke="#7a6236" strokeWidth="2" /></Icon></button>
        </div>
        <button aria-label="新标签" className="ml-[7px] mb-[6px]"><Icon size="size-[10px]" box={10}><path d="M5 0V10M0 5H10" stroke="#a39d99" strokeWidth="2" /></Icon></button>
        <button aria-label="标签列表" className="ml-auto mr-[6px] mb-[7px]"><Icon size="size-[10px]" box={10}><path d="M1 1.500H9" stroke="#888" strokeWidth="1.500" /><path d="M1 5H9L5 9Z" fill="#888" /></Icon></button>
      </div>
      <div className="flex flex-col flex-1 min-h-0 bg-white border border-[#b9bfc9]">
        <ViewToolbar />
        <svg viewBox="0 0 1224 816" className="flex-1 min-h-0 w-full">
          <GateValve id="green" base="#049523" dark="#04741a" rim="#04871f" shine="#35b552" x="519" y="76" />
          <GateValve id="red" base="#aa2027" dark="#7f191d" rim="#961d22" shine="#c24a50" x="323" y="184" />
          <GateValve id="gray" base="#616161" dark="#484848" rim="#565656" shine="#858585" x="132" y="291" />
        </svg>
      </div>
    </main>
  );
}

function DriveRow({ children, icon }) {
  return (
    <li className="flex items-center h-[18px] pl-[2px]">
      <Chevron />
      <span className="ml-[5px] mr-[2px]">{icon}</span>
      {children}
    </li>
  );
}

function Section({ title }) {
  return (
    <h3 className="flex items-center gap-[6px] h-6 pl-1 bg-[#fcfcfc] border border-[#b9bfc9] font-bold text-gray-800">
      <svg viewBox="0 0 9 8" className="w-[9px] h-2"><path d="M0 0H9L4.500 8Z" fill="#4a5262" /></svg>
      {title}
    </h3>
  );
}

const bigFolder = <path d="M1 6H3V3L5 2H8L10 3V5H24V22H1Z" fill="url(#gold)" stroke="#d18e17" strokeWidth="0.7" />;

function FileBrowser() {
  return (
    <aside className="flex flex-col w-[332px] shrink-0">
      <PanelHeader title="文件浏览器" end="pr-[5px]" />
      <div className="flex flex-1 min-h-0">
        <div className="flex flex-col flex-1 min-w-0 pl-px pt-px border border-b-gray-400 border-[#b9bfc9]">
          <div className="flex gap-[3px] h-[29px]">
            <button aria-label="后退" className="grid place-items-center w-[30px] h-[26px] bg-[#ececec] border border-[#d2d5da]"><Icon><path d="M0 8 7 3V6H16V10H7V13Z" fill="#aaa" /></Icon></button>
            <button aria-label="前进" className="grid place-items-center w-[30px] h-[26px] bg-[#ececec] border border-[#d2d5da]"><Icon><path d="M16 8 9 3V6H0V10H9V13Z" fill="#aaa" /></Icon></button>
            <button aria-label="向上" className="grid place-items-center w-[30px] h-[26px] bg-[#ececec] border border-[#d2d5da]"><Icon><path d="M8 0 15 7H11V16H5V7H1Z" fill="#aaa" /></Icon></button>
            <button aria-label="刷新" className="grid place-items-center w-[30px] h-[26px] bg-white border border-[#b9bfc9]"><Icon size="size-[18px]"><path d="M1 9Q0 3 8 3H9V0L14 4 9 8V5Q4 5 4 9ZM15 7Q16 13 8 13H7V16L2 12 7 8V11Q12 11 12 7Z" fill="#1488ad" /></Icon></button>
          </div>
          <ul className="flex-1 min-h-0 overflow-hidden mr-px border border-[#b9bfc9] bg-[repeating-linear-gradient(#fff_0_18px,#f5f5f5_18px_36px)]">
            <DriveRow icon={<Star className="size-4" fill="#1fa9d4" stroke="#1fa9d4" strokeWidth={1} />}>收藏</DriveRow>
            {drives.map((d) => (
              <DriveRow key={d} icon={<Icon><path d="M0.500 3H1.500V1.500H6.500V3H15.500V14H0.500Z" fill="url(#gold)" stroke="#e09a1c" strokeWidth="0.700" /></Icon>}>{d}</DriveRow>
            ))}
          </ul>
          <div className="flex h-[361px] mt-[9px] mr-[2px] shrink-0">
            <div className="flex flex-col flex-1 min-w-0 bg-[#dde1e9]">
              <Section title="搜索" />
              <div className="flex gap-1 h-8 mb-[2px] px-[2px] py-[3px] border border-t-0 border-[#b9bfc9]">
                <label className="relative flex flex-1 min-w-0">
                  <input aria-label="搜索" placeholder="搜索..." className="w-full px-1 bg-white border border-[#b9bfc9] placeholder:text-gray-500" />
                  <Caret className="absolute right-[7px] top-[9px]" />
                </label>
                <button aria-label="执行搜索" className="grid place-items-center w-[38px] bg-white border border-[#b9bfc9]"><Icon><circle cx="7.500" cy="7" r="6" stroke="#888" /><path d="M12 12 15 15" stroke="#7fb0d8" strokeWidth="2" /></Icon></button>
                <button aria-label="搜索工具" className="grid place-items-center w-[38px] bg-white border border-[#b9bfc9]"><Icon><path d="M1 1 4 1 7 5 6 8 2 5Z" fill="#aaa" /><path d="M7 7Q7 13 12 15M7 7Q13 7 15 12" stroke="#d42a24" strokeWidth="2" /></Icon></button>
              </div>
              <Section title="文件列表" />
              <div className="flex gap-[3px] h-8 px-[2px] py-[3px] border-x border-[#b9bfc9]">
                <button aria-label="视图方式" className="flex items-center w-[42px] pl-2 gap-[7px] bg-white border border-[#b9bfc9]">
                  <Icon size="size-[17px]"><path d="M0 1h5v4h-5z" fill="#f5b021" /><path d="M9 1h4v4h-4z" fill="#2a9cbd" /><path d="M0 10 4 6M6 3h2M14 3h2M6 8h2M14 8h2M6 14h2M14 14h2" stroke="#2a7fa8" strokeWidth="1.300" /><path d="M9 6h4v4h-4z" fill="#e07820" /><path d="M0 15 2 11 4 15Z" fill="#d33" /><path d="M9 12h4v3h-4z" fill="#467" /></Icon>
                  <svg viewBox="0 0 7 4" className="w-[7px] h-1"><path d="M0 0H7L3.500 4Z" /></svg>
                </button>
                <span className="relative flex-1">
                  <select aria-label="文件类型" className="w-full h-full px-[2px] appearance-none bg-white border border-[#b9bfc9]"><option>所有支持文件</option></select>
                  <Caret className="absolute right-[7px] top-[10px]" />
                </span>
              </div>
              <div className="flex-1 bg-white border border-[#b9bfc9]" />
              <div className="flex items-end h-[27px] pr-[3px]">
                <label htmlFor="objects" className="w-[54px] pl-[2px] leading-[22px]">对象列表</label>
                <span className="relative flex-1 h-6">
                  <select id="objects" className="w-full h-full appearance-none bg-white border border-b-0 border-[#b9bfc9]" />
                  <Caret className="absolute right-[7px] top-[10px]" />
                </span>
              </div>
            </div>
            <div className="flex flex-col items-center w-[15px] ml-px bg-[#d9dde5]">
              <svg viewBox="0 0 9 5" className="w-[9px] h-[5px] my-[6px]"><path d="M0 5H9L4.500 0Z" fill="#444" /></svg>
              <div className="flex flex-col justify-center items-center gap-px w-full h-[301px] bg-[#e9ecf2] border border-[#8b93a0]">
                {[0, 1, 2, 3].map((i) => <i key={i} className="h-px w-2 bg-gray-500" />)}
              </div>
              <svg viewBox="0 0 9 5" className="w-[9px] h-[5px] mt-auto mb-[6px]"><path d="M0 0H9L4.500 5Z" fill="#444" /></svg>
            </div>
          </div>
        </div>
        <nav className="flex flex-col w-[29px] shrink-0">
          <button aria-label="文件浏览器" className="grid place-items-center h-[47px] -ml-px bg-[#fcfcfc] border border-l-0 border-[#b9bfc9]"><Icon size="size-6" box={24}>{bigFolder}</Icon></button>
          <button aria-label="重用库" className="grid place-items-center h-12 pb-[2px]"><Icon size="size-6" box={24}>{bigFolder}<path d="M4 20 20 5" stroke="#11688f" strokeWidth="3.500" /><circle cx="4" cy="20" r="3.500" fill="#1d84ac" /><circle cx="20" cy="5" r="3.500" fill="#11688f" /><circle cx="13" cy="12" r="3" stroke="#bfe6f2" /><path d="M2 1h7v4h-7z" fill="#b9744a" /></Icon></button>
          <button aria-label="图层" className="grid place-items-center h-12"><Icon size="size-6" box={24}><path d="M1 9 12 19 23 13V10L10 8Z" fill="#c5e4ec" stroke="#5b9db0" /><path d="M2 12 12 17 23 11M2 10 12 15 23 9" stroke="#5b9db0" /><path d="M1 6 14 3 23 8 12 13Z" fill="#3fcbb0" stroke="#2d9c8b" strokeWidth="0.7" /></Icon></button>
          <button aria-label="材质库" className="grid place-items-center h-12 pb-[2px]"><Icon size="size-6" box={24}>{bigFolder}<circle cx="17" cy="15" r="6.500" fill="#2f9a52" stroke="#555" strokeWidth="0.7" /><path d="M10.500 15A6.500 6.500 0 0 1 17 8.500Q19 12 16 15Z" fill="#e6f3fb" /><path d="M10.500 15A6.500 6.500 0 0 0 17 21.500Q20 18 16 15Z" fill="#e8762a" /></Icon></button>
        </nav>
      </div>
      <div className="flex items-start h-[22px]">
        <button className="h-[22px] px-3">输出</button>
        <button className="w-[84px] h-[22px] bg-[#fcfcfc] border border-t-0 border-[#b9bfc9]">文件浏览器</button>
      </div>
    </aside>
  );
}

function StatusBar() {
  return (
    <footer className="flex items-center h-[29px] pl-[6px] pr-px text-gray-800">
      <p className="mr-auto">选择命令或实体</p>
      <span className="w-px h-6 mr-[15px] bg-[#868a90]" />
      <button aria-label="提示" className="grid place-items-center w-[21px] h-5 bg-[#ffe285] border border-[#c9943c]"><Icon size="size-[14px]"><path d="M1 1H15V15H1Z" fill="#fff" stroke="#4a76b8" strokeWidth="1.500" /><path d="M1 1H15V4H1Z" fill="#4a76b8" /><path d="M3 7H5M3 10H5M3 13H5M8 7H14" stroke="#345" strokeWidth="1.500" /><path d="M10.500 7V14" stroke="#c22" strokeWidth="2.500" /></Icon></button>
      <button aria-label="屏幕" className="grid place-items-center w-[21px] h-5 ml-2 bg-[#ffe285] border border-[#c9943c]"><Icon size="size-[15px]"><path d="M0.500 2H15.500V11H0.500Z" fill="#35b8dc" stroke="#4f8396" /><path d="M4 13.500H12" stroke="#444" strokeWidth="3" /></Icon></button>
      <button aria-label="列表" className="ml-[10px] mr-[11px]"><Icon size="size-[15px]"><path d="M1 1H15V12L12 15H1Z" fill="#fff" stroke="#5f7fc0" strokeWidth="1.500" /><path d="M1 1H15V4H1Z" fill="#4a76c8" /><path d="M3 7H13M3 9.500H13M3 12H10" stroke="#8a8f98" /></Icon></button>
      <input aria-label="命令输入" className="w-[350px] h-[22px] bg-white border border-[#b9bfc9]" />
    </footer>
  );
}

export default function App() {
  return (
    <div className="relative flex flex-col h-screen overflow-hidden bg-[#e1e5e9] text-xs text-black font-['Roboto','Noto_Sans_CJK_SC',sans-serif]">
      <Defs />
      {/* 顶部露出的浮动条 */}
      <div className="absolute top-0 left-[936px] w-12 h-px bg-[#0078d7]" />
      <div className="absolute top-0 right-[158px] w-[189px] h-[3px] rounded-b bg-[#0a5a94] shadow-md shadow-black/60" />
      <div className="flex flex-1 min-h-0">
        <div className="flex flex-col flex-1 min-w-0">
          <TitleBar />
          <RibbonTabs />
          <Ribbon />
          <div className="flex flex-1 min-h-0">
            <ManagerPanel />
            <DocumentArea />
            <FileBrowser />
          </div>
          <StatusBar />
        </div>
        <div className="flex flex-col w-[9px] bg-[#e6e6e6]">
          <div className="h-[34px] bg-[#b7472a]" />
          <div className="h-[127px] bg-[#f3f2f1]" />
          <div className="mt-auto h-[21px] bg-[#f5f5f5] border-t border-gray-300" />
        </div>
      </div>
      {/* 任务栏 */}
      <div className="flex h-[9px] shrink-0 bg-[#1b3445] border-t border-white overflow-hidden">
        <div className="w-[288px] ml-12 bg-[#f2f2f2] border border-gray-300">
          <svg viewBox="0 0 80 8" className="w-20 h-2 ml-[220px]"><path d="M6 2H20M8 5H18M13 1V8M21 6H14" stroke="#445" strokeWidth="1.500" /><ellipse cx="38" cy="12" rx="14" ry="12" fill="#3f8fd2" /><path d="M34 2Q46 0 50 8H38Z" fill="#a5dc7a" /></svg>
        </div>
        <div className="w-12 ml-[589px] bg-[#96532f]" />
        <div className="w-12 ml-[99px] bg-[#4a5866]" />
        <span className="ml-auto mr-[80px] pt-[2px] text-white leading-3">10:50</span>
      </div>
    </div>
  );
}
